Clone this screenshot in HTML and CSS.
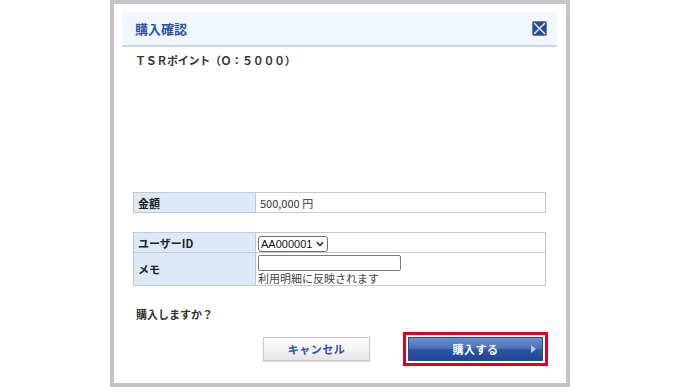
FILE: index.html
```html
<!DOCTYPE html>
<html lang="ja">
<head>
<meta charset="utf-8">
<title>購入確認</title>
<link rel="stylesheet" href="styles.css">
</head>
<body>
<div class="dialog">
  <div class="header">
    <span class="title">購入確認</span>
    <svg class="close" width="15" height="15" viewBox="0 0 15 15">
      <rect x="0.5" y="0.5" width="14" height="14" rx="1.5" fill="#2b4b8f" stroke="#5f7fb8"/>
      <path d="M2.5 2.5 L12.5 12.5 M12.5 2.5 L2.5 12.5" stroke="#d7e2f5" stroke-width="1.6" stroke-linecap="round"/>
    </svg>
  </div>
  <div class="body">
    <div class="points">ＴＳＲポイント（Ｏ：５０００）</div>
    <table class="grid first">
      <tr class="r1"><th>金額</th><td>500,000 円</td></tr>
    </table>
    <table class="grid second">
      <tr class="r1"><th>ユーザーID</th><td>
        <span class="selwrap">
          <select class="sel"><option>AA000001</option></select>
          <svg class="chev" width="8" height="6" viewBox="0 0 8 6"><path d="M1 1.2 L4 4.4 L7 1.2" fill="none" stroke="#222" stroke-width="1.5"/></svg>
        </span>
      </td></tr>
      <tr class="r2"><th>メモ</th><td><input class="memo" type="text"><div class="hint">利用明細に反映されます</div></td></tr>
    </table>
    <div class="question">購入しますか？</div>
    <div class="actions">
      <button class="btn cancel">キャンセル</button>
      <div class="focus"><button class="btn buy">購入する<span class="arrow"></span></button></div>
    </div>
  </div>
</div>
</body>
</html>
```
FILE: styles.css
```css
html, body { margin: 0; padding: 0; background: #fff; }
body { font-family: "Noto Sans CJK JP", "Liberation Sans", sans-serif; color: #333; }
.dialog {
  margin-left: 110px;
  width: 460px;
  height: 387px;
  box-sizing: border-box;
  border: 4px solid #c4c4cc;
  padding: 8px 9px 0 8px;
  background: #fff;
}
.header {
  height: 33px;
  background: #f2f6fd;
  border-bottom: 2px solid #cdd5e3;
  display: flex;
  align-items: center;
  justify-content: space-between;
  padding: 0 10px 0 13px;
}
.title { font-size: 13px; font-weight: bold; color: #2d55a0; line-height: 1; }
.close { display: block; }
.body { padding: 0 11px; }
.points {
  margin-top: 5px;
  padding-left: 2px;
  font-size: 11px;
  font-weight: bold;
  line-height: 16px;
  color: #333;
  letter-spacing: -0.3px;
}
.grid {
  width: 100%;
  border-collapse: collapse;
  font-size: 11px;
}
.grid th, .grid td { border: 1px solid #c3c7cf; padding: 0 0 0 4px; text-align: left; vertical-align: middle; }
.grid th { width: 117px; background: #dce9f7; font-weight: bold; color: #222; }
.grid td { color: #333; }
.first { margin-top: 124px; }
.second { margin-top: 19px; }
.r1 { height: 20px; }
.r2 { height: 33px; }
.second td { padding-left: 2px; }
.selwrap { position: relative; display: inline-block; vertical-align: middle; }
.sel {
  display: block;
  -webkit-appearance: none;
  appearance: none;
  width: 70px;
  height: 16px;
  box-sizing: border-box;
  border: 1px solid #6f6f6f;
  border-radius: 3px;
  background: #fff;
  font-family: "Liberation Sans", sans-serif;
  font-size: 11px;
  color: #111;
  padding: 0 0 0 2px;
  margin: 0;
}
.chev { position: absolute; right: 4px; top: 5px; pointer-events: none; }
.memo {
  display: block;
  width: 143px;
  height: 16px;
  box-sizing: border-box;
  border: 1px solid #7a7a7a;
  border-radius: 2px;
  padding: 0;
  margin: 1px 0 0;
}
.hint { font-size: 11px; line-height: 14px; color: #444; }
.question {
  margin-top: 20px;
  padding-left: 3px;
  font-size: 11px;
  font-weight: bold;
  line-height: 16px;
  color: #333;
}
.actions {
  display: flex;
  justify-content: flex-end;
  align-items: center;
  gap: 33px;
  margin-top: 10px;
  margin-right: -2px;
}
.btn {
  font-family: "Noto Sans CJK JP", sans-serif;
  font-size: 11px;
  font-weight: bold;
  height: 24px;
  padding: 0;
  cursor: pointer;
  letter-spacing: 0.5px;
}
.cancel {
  width: 107px;
  border: 1px solid #c9c9c9;
  background: linear-gradient(#ffffff, #f3f3f3 50%, #e6e6e6);
  color: #2d55a0;
  box-shadow: 0 1px 1px #dcdcdc;
}
.focus {
  border: 3px solid #e0001b;
  padding: 2px;
  background: #fff;
}
.buy {
  display: block;
  position: relative;
  width: 135px;
  border: 1px solid #2a4a88;
  background: linear-gradient(#6c8fcc, #4b74ba 45%, #2b55a3 55%, #1f4694);
  color: #fff;
}
.arrow {
  position: absolute;
  right: 6px;
  top: 7px;
  width: 0;
  height: 0;
  border-top: 4px solid transparent;
  border-bottom: 4px solid transparent;
  border-left: 5px solid #b8c9e8;
}
```
